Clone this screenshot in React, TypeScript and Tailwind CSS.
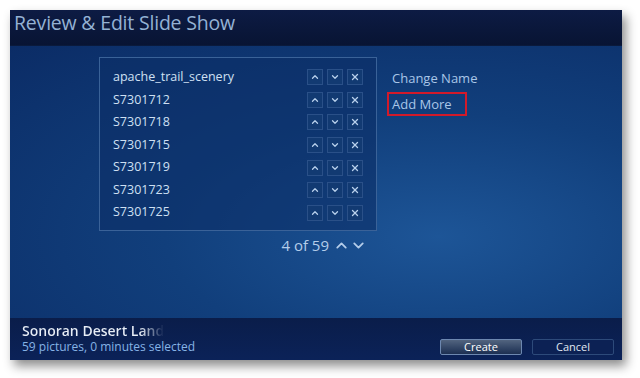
import { ChevronUp, ChevronDown, X } from "lucide-react";

const items = [
  "apache_trail_scenery",
  "S7301712",
  "S7301718",
  "S7301715",
  "S7301719",
  "S7301723",
  "S7301725",
];

function SmallButton({ children }: { children: React.ReactNode }) {
  return (
    <div className="w-[16px] h-[16px] flex items-center justify-center border border-[#2a5088] bg-[#123a72] text-[#b8d0ec]">
      {children}
    </div>
  );
}

export default function App() {
  return (
    <div className="w-[640px] h-[378px] bg-white pt-[10px] pl-[10px] font-['Open_Sans',sans-serif]">
      <div className="w-[612px] h-[350px] flex flex-col shadow-[4px_6px_10px_rgba(0,0,0,0.45)] bg-[#0b2b63]">
        {/* Title bar */}
        <div className="h-[36px] bg-gradient-to-b from-[#0d1b44] to-[#081433] px-[4px] border-b border-[#0a1a3c]">
          <h1 className="text-[19.5px] leading-[22px] pt-[2px] text-[#94b2d4] tracking-[-0.2px]">
            Review &amp; Edit Slide Show
          </h1>
        </div>

        {/* Main */}
        <div className="flex-1 flex bg-[radial-gradient(ellipse_at_70%_70%,#1d5597_0%,#113f7c_45%,#0b2c66_100%)] pt-[11px] pl-[89px]">
          <div className="flex flex-col items-end">
            <div className="w-[278px] h-[174px] border border-[#3a6298] bg-[#0c2e68]/60 pt-[8px] pl-[13px] pr-[13px]">
              {items.map((name) => (
                <div key={name} className="h-[22.6px] flex items-center justify-between">
                  <span className="text-[12.5px] font-medium text-[#cfe0f3]">{name}</span>
                  <div className="flex gap-[4px]">
                    <SmallButton>
                      <ChevronUp size={10} strokeWidth={3} />
                    </SmallButton>
                    <SmallButton>
                      <ChevronDown size={10} strokeWidth={3} />
                    </SmallButton>
                    <SmallButton>
                      <X size={10} strokeWidth={3} />
                    </SmallButton>
                  </div>
                </div>
              ))}
            </div>
            <div className="flex items-center gap-[4px] pt-[3px] pr-[10px] text-[15px] text-[#b4cdea]">
              <span>4 of 59</span>
              <ChevronUp size={17} strokeWidth={2.5} />
              <ChevronDown size={17} strokeWidth={2.5} className="-ml-[4px]" />
            </div>
          </div>

          <div className="pl-[15px] pt-[12px] flex flex-col text-[13px] font-medium text-[#a9c6e8]">
            <span className="leading-[18px]">Change Name</span>
            <span className="mt-[5px] -ml-[5px] w-[80px] h-[24px] border-2 border-[#d21a2a] pl-[3px] leading-[20px]">
              Add More
            </span>
          </div>
        </div>

        {/* Footer */}
        <div className="h-[42px] bg-gradient-to-b from-[#0a1d4a] to-[#0b2258] flex items-end justify-between pl-[12px] pr-[8px] pb-[5px]">
          <div className="flex flex-col">
            <span className="w-[145px] overflow-hidden whitespace-nowrap text-[14px] leading-[17px] font-semibold text-transparent bg-clip-text bg-[linear-gradient(to_right,#e8eef6_0px,#e8eef6_118px,rgba(232,238,246,0)_142px)]">
              Sonoran Desert Landscapes
            </span>
            <span className="text-[12px] leading-[16px] text-[#86b3e6] whitespace-nowrap">
              59 pictures, 0 minutes selected
            </span>
          </div>
          <div className="flex gap-[10px]">
            <button className="w-[82px] h-[16px] rounded-[2px] border border-[#6d88b0] bg-gradient-to-b from-[#52647f] to-[#1c2f52] text-[11px] leading-[14px] text-white">
              Create
            </button>
            <button className="w-[82px] h-[16px] rounded-[2px] border border-[#2d4a7a] bg-[#0c2154] text-[11px] leading-[14px] text-[#e0e8f2]">
              Cancel
            </button>
          </div>
        </div>
      </div>
    </div>
  );
}
